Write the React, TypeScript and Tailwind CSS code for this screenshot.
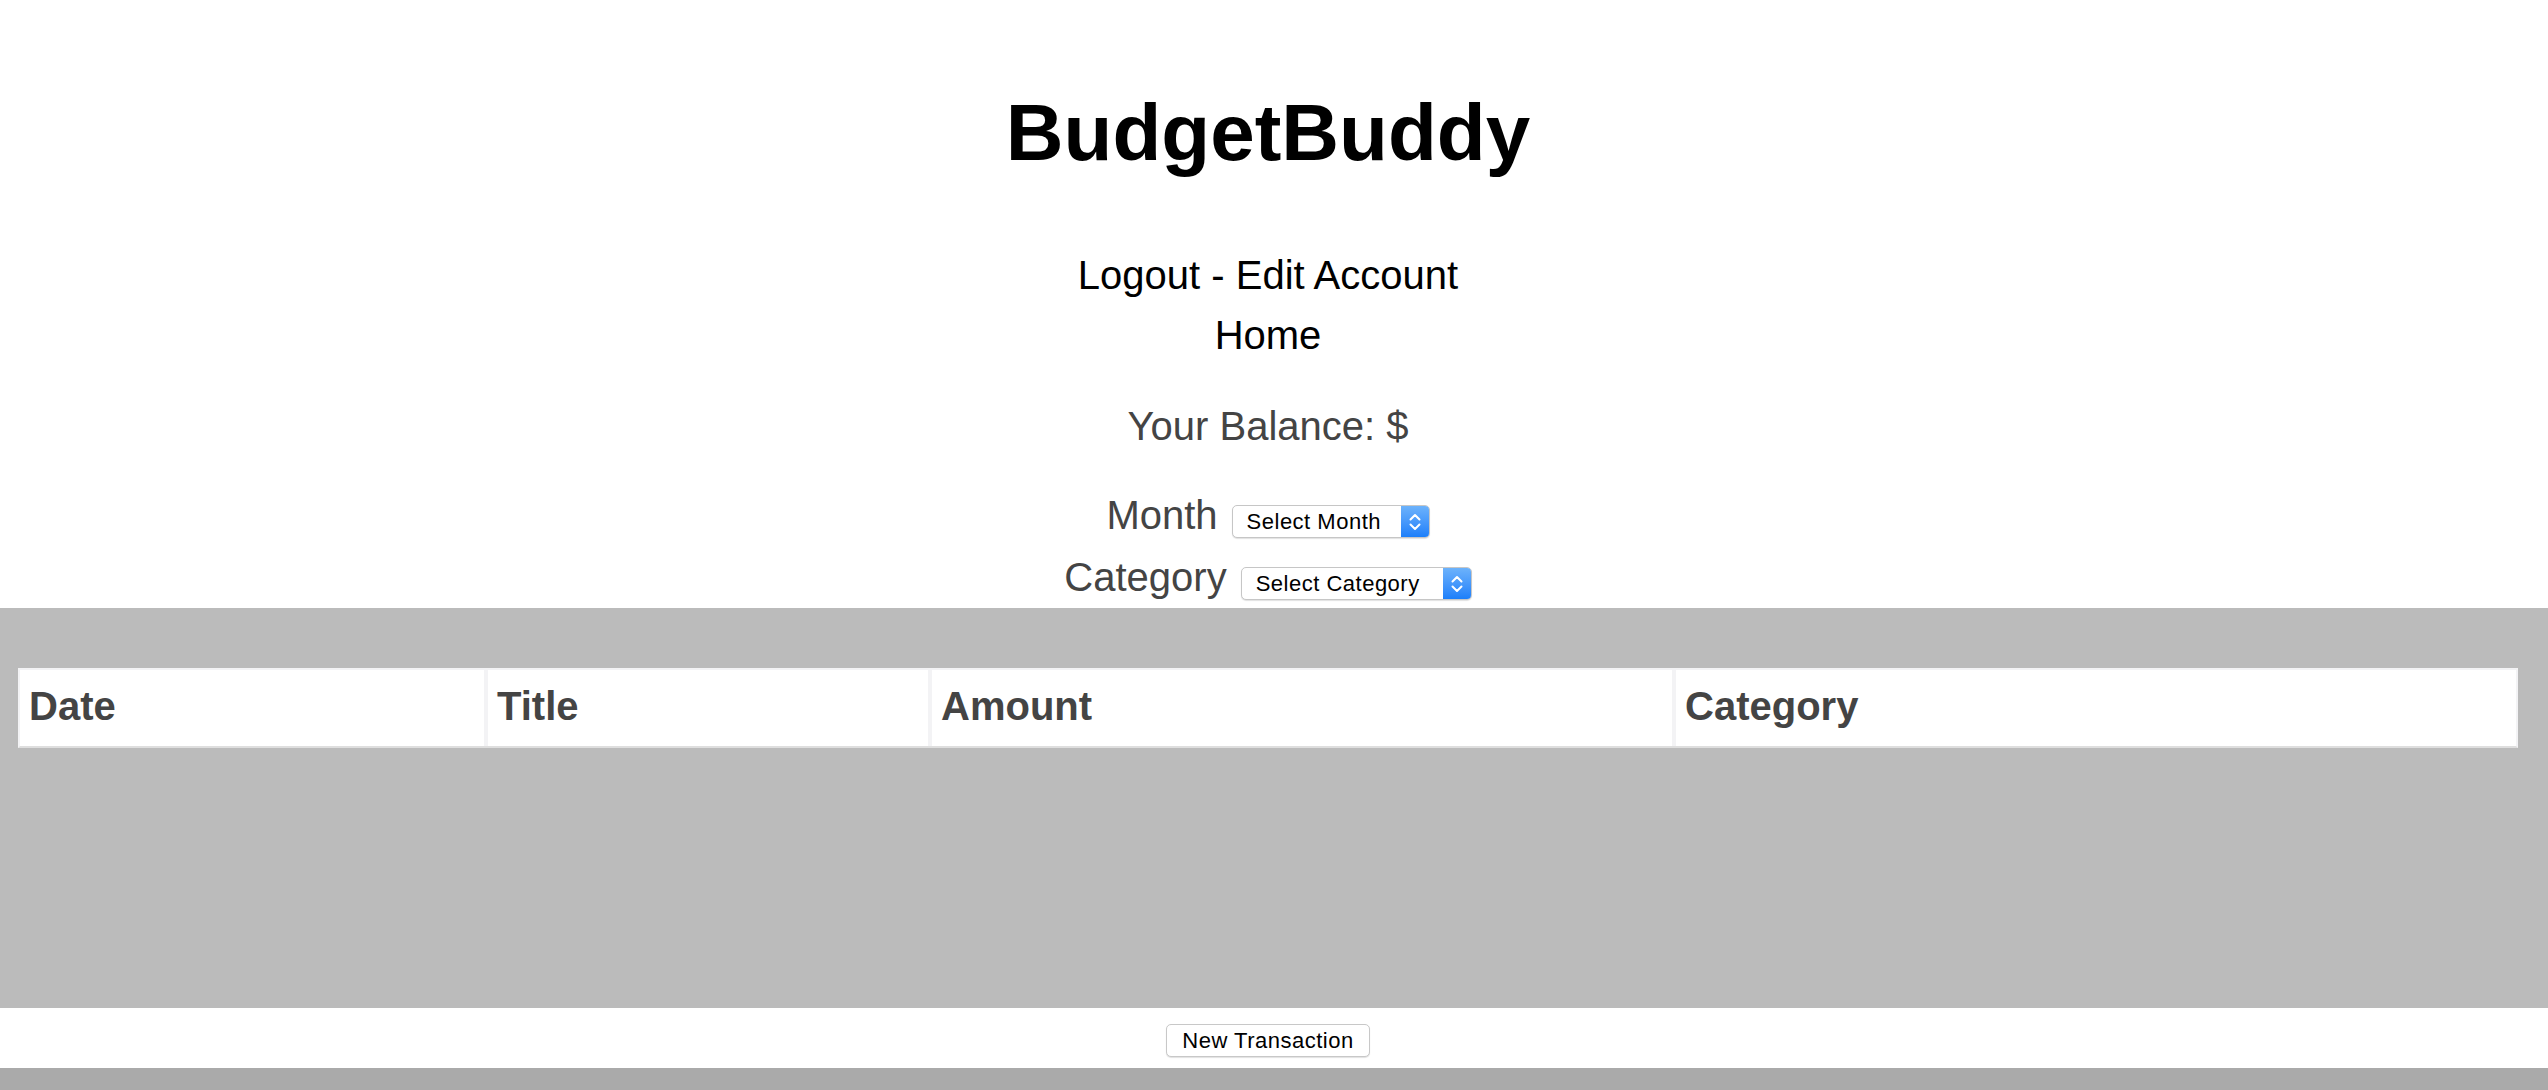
import React from 'react';

const columns = [
  { label: 'Date', width: 'w-[464px]' },
  { label: 'Title', width: 'w-[440px]' },
  { label: 'Amount', width: 'w-[740px]' },
  { label: 'Category', width: 'w-[840px]' },
];

function FakeSelect({ text, width }: { text: string; width: string }) {
  return (
    <div
      className={`ml-[14px] inline-flex h-[33px] ${width} items-stretch overflow-hidden rounded-[5px] border border-[#c6c6c6] bg-white shadow-[0_1px_1px_rgba(0,0,0,0.12)]`}
    >
      <span className="flex-1 pl-[14px] text-[22px] leading-[31px] tracking-[0.5px] text-black">{text}</span>
      <span className="flex w-[28px] items-center justify-center bg-gradient-to-b from-[#6cb2fb] to-[#1b7ffa]">
        <svg width="14" height="22" viewBox="0 0 14 22" fill="none" stroke="white" strokeWidth="2" strokeLinecap="round" strokeLinejoin="round">
          <path d="M2.5 8.5 7 4l4.5 4.5" />
          <path d="M2.5 13.5 7 18l4.5-4.5" />
        </svg>
      </span>
    </div>
  );
}

export default function App() {
  return (
    <div className="flex min-h-[1090px] flex-col bg-white font-['Liberation_Sans',Arial,sans-serif]">
      <header className="flex flex-col items-center pr-[12px] pt-[73px]">
        <h1 className="text-[80px] font-bold leading-[120px] text-black">BudgetBuddy</h1>
        <div className="mt-[52px] text-[40px] leading-[60px] text-black">Logout - Edit Account</div>
        <div className="text-[40px] leading-[60px] text-black">Home</div>
        <div className="mt-[31px] text-[40px] leading-[60px] text-[#444]">Your Balance: $</div>

        <div className="mt-[28px] flex h-[62px] items-baseline text-[40px] leading-[62px] text-[#444]">
          <span>Month</span>
          <FakeSelect text="Select Month" width="w-[198px]" />
        </div>
        <div className="flex h-[62px] items-baseline text-[40px] leading-[62px] text-[#444]">
          <span>Category</span>
          <FakeSelect text="Select Category" width="w-[231px]" />
        </div>
      </header>

      <section className="h-[400px] bg-[#bbbbbb] pl-[18px] pt-[60px]">
        <div className="flex w-[2500px] gap-[4px] border-x-2 border-t-2 border-b-2 border-x-[#f3f3f5] border-t-[#f3f3f5] border-b-[#dedede] bg-[#f3f3f5]">
          {columns.map((col) => (
            <div
              key={col.label}
              className={`${col.width} h-[76px] bg-white pl-[9px] pt-[12px] text-[40px] font-bold leading-[48px] text-[#444]`}
            >
              {col.label}
            </div>
          ))}
        </div>
      </section>

      <div className="flex h-[60px] justify-center bg-white pr-[12px] pt-[16px]">
        <button className="h-[33px] w-[204px] rounded-[5px] border border-[#c8c8c8] bg-white text-[22px] leading-[31px] tracking-[0.5px] text-black shadow-[0_1px_1px_rgba(0,0,0,0.12)]">
          New Transaction
        </button>
      </div>

      <div className="flex-1 bg-[#aaaaaa]" />
    </div>
  );
}
